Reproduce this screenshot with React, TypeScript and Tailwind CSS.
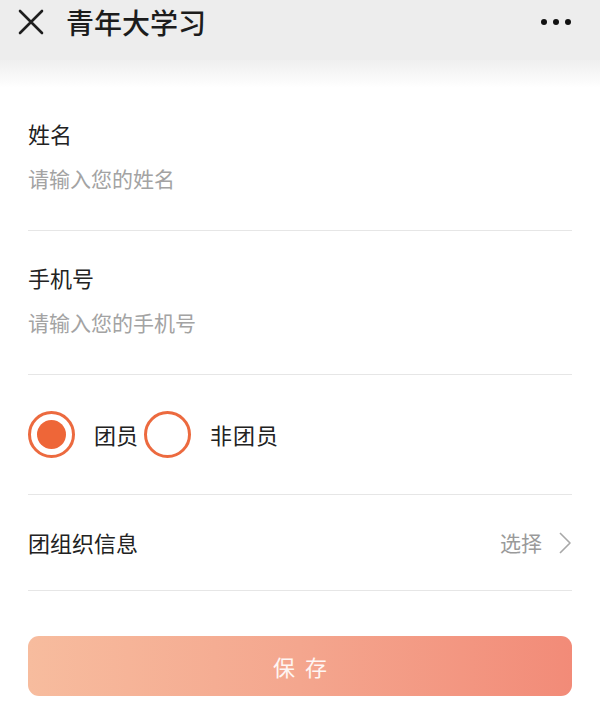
import React from 'react';

const Divider: React.FC = () => <div className="h-px w-full bg-[#e6e6e6]" />;

const Radio: React.FC<{ checked?: boolean }> = ({ checked }) => (
  <span className="flex h-[47px] w-[47px] shrink-0 items-center justify-center rounded-full border-[3px] border-[#ec6a3f] bg-white">
    {checked && <span className="h-[29px] w-[29px] rounded-full bg-[#ee6638]" />}
  </span>
);

export default function App() {
  return (
    <div
      className="min-h-[706px] w-[600px] bg-white text-[#222]"
      style={{ fontFamily: '"Noto Sans CJK SC", "Noto Sans", sans-serif' }}
    >
      <header className="h-[60px] bg-[#ededed]">
        <div className="flex h-[44px] items-center justify-between pl-[18px] pr-[29px]">
          <div className="flex items-center">
            <svg width="26" height="26" viewBox="0 0 26 26" className="text-[#1e1e1e]">
              <path d="M2 2 L24 24 M24 2 L2 24" stroke="currentColor" strokeWidth="2.6" strokeLinecap="round" />
            </svg>
            <h1 className="ml-[22px] text-[28px] font-medium leading-none text-[#1c1c1c]">青年大学习</h1>
          </div>
          <div className="flex items-center gap-[6px]">
            <span className="h-[6px] w-[6px] rounded-full bg-[#111]" />
            <span className="h-[6px] w-[6px] rounded-full bg-[#111]" />
            <span className="h-[6px] w-[6px] rounded-full bg-[#111]" />
          </div>
        </div>
      </header>
      <div className="h-[28px] bg-gradient-to-b from-[#efefef] to-white" />

      <main className="px-[28px]">
        <div className="pb-[38px] pt-[31px]">
          <div className="text-[22px] leading-[28px]">姓名</div>
          <div className="mt-[17px] text-[21px] leading-[28px] text-[#a3a3a3]">请输入您的姓名</div>
        </div>
        <Divider />

        <div className="pb-[38px] pt-[32px]">
          <div className="text-[22px] leading-[28px]">手机号</div>
          <div className="mt-[17px] text-[21px] leading-[28px] text-[#a3a3a3]">请输入您的手机号</div>
        </div>
        <Divider />

        <div className="flex h-[119px] items-center">
          <Radio checked />
          <span className="ml-[19px] mr-[6px] text-[22px]">团员</span>
          <Radio />
          <span className="ml-[19px] text-[22px] tracking-[1px]">非团员</span>
        </div>
        <Divider />

        <div className="flex h-[95px] items-center justify-between">
          <span className="text-[22px]">团组织信息</span>
          <div className="flex items-center">
            <span className="text-[21px] text-[#9a9a9a]">选择</span>
            <svg width="14" height="24" viewBox="0 0 14 24" className="ml-[16px] text-[#a8a8a8]">
              <path d="M2 2 L12 12 L2 22" fill="none" stroke="currentColor" strokeWidth="1.6" strokeLinejoin="round" />
            </svg>
          </div>
        </div>
        <Divider />

        <button className="mt-[45px] flex h-[60px] w-full items-center justify-center rounded-[11px] bg-gradient-to-r from-[#f7bc9e] via-[#f4a68e] to-[#f28b78] text-[22px] tracking-[10px] text-white/90">
          <span className="pl-[10px]">保存</span>
        </button>
      </main>
    </div>
  );
}
